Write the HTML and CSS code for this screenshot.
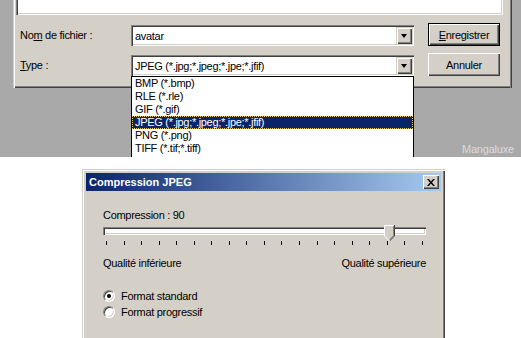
FILE: index.html
```html
<!DOCTYPE html>
<html lang="fr">
<head>
<meta charset="utf-8">
<title>Enregistrer - Compression JPEG</title>
<link rel="stylesheet" href="styles.css">
</head>
<body>
<div class="screen">
  <div class="shot-top">
    <div class="savedlg">
      <div class="filelist"></div>
      <div class="form">
        <div class="row">
          <span class="label">No<u>m</u> de fichier :</span>
          <div class="combo"><span class="combo-text">avatar</span><span class="drop-btn"><i class="tri"></i></span></div>
          <button class="btn default"><span><u>E</u>nregistrer</span></button>
        </div>
        <div class="row row2">
          <span class="label"><u>T</u>ype :</span>
          <div class="combo"><span class="combo-text">JPEG (*.jpg;*.jpeg;*.jpe;*.jfif)</span><span class="drop-btn"><i class="tri"></i></span></div>
          <button class="btn"><span>Annuler</span></button>
        </div>
      </div>
    </div>
    <ul class="droplist">
      <li>BMP (*.bmp)</li>
      <li>RLE (*.rle)</li>
      <li>GIF (*.gif)</li>
      <li class="sel">JPEG (*.jpg;*.jpeg;*.jpe;*.jfif)</li>
      <li>PNG (*.png)</li>
      <li>TIFF (*.tif;*.tiff)</li>
    </ul>
    <span class="watermark">Mangaluxe</span>
  </div>
  <div class="shot-bottom">
    <div class="jpegdlg">
      <div class="titlebar">
        <span class="title">Compression JPEG</span>
        <span class="close"><svg width="8" height="7" viewBox="0 0 8 7"><path d="M0 0h2l2 2.5L6 0h2L5 3.5 8 7H6L4 4.5 2 7H0l3-3.5z" fill="#000"/></svg></span>
      </div>
      <div class="content">
        <div class="caption">Compression : 90</div>
        <div class="slider">
          <div class="track"></div>
          <span class="thumb"><svg width="11" height="16" viewBox="0 0 11 16"><path d="M0.5 0.5h9.5v10l-5 5l-5-5z" fill="#d4d0c8"/><path d="M0.5 11V0.5H10" fill="none" stroke="#fff"/><path d="M10.5 0v11l-5 5" fill="none" stroke="#404040"/><path d="M9.5 1v9.6l-4 4" fill="none" stroke="#808080"/><path d="M0.5 11l5 5" fill="none" stroke="#fff"/></svg></span>
        </div>
        <div class="ticks">
          <i></i><i></i><i></i><i></i><i></i><i></i><i></i><i></i><i></i><i></i><i></i><i></i><i></i><i></i><i></i><i></i><i></i><i></i><i></i>
        </div>
        <div class="scale"><span>Qualité inférieure</span><span>Qualité supérieure</span></div>
        <div class="radios">
          <label class="radio"><span class="dot checked"></span>Format standard</label>
          <label class="radio"><span class="dot"></span>Format progressif</label>
        </div>
      </div>
    </div>
  </div>
</div>
</body>
</html>
```

FILE: styles.css
```css
* { box-sizing: border-box; }
html, body { margin: 0; padding: 0; }
body {
  width: 521px;
  height: 338px;
  overflow: hidden;
  background: #fff;
  font-family: "Liberation Sans", Arial, sans-serif;
  font-size: 11px;
  letter-spacing: -0.3px;
  color: #000;
}
.screen { width: 521px; height: 338px; display: flex; flex-direction: column; }

/* ---------- top screenshot ---------- */
.shot-top {
  position: relative;
  height: 157px;
  background: #a9a9a9;
  overflow: hidden;
  flex: none;
}
.savedlg {
  margin-left: 13px;
  width: 499px;
  height: 88px;
  background: #d4d0c8;
  box-shadow: inset 1px 0 #d4d0c8, inset 2px 0 #fff,
              inset -1px 0 #404040, inset -2px 0 #808080,
              inset 0 -1px #404040, inset 0 -2px #808080;
}
.filelist {
  margin-left: 3px;
  width: 487px;
  height: 15px;
  background: #fff;
  box-shadow: inset 1px 0 #808080, inset 2px 0 #404040,
              inset -1px 0 #fff, inset -2px 0 #d4d0c8,
              inset 0 -1px #fff, inset 0 -2px #d4d0c8;
}
.form { padding-left: 7px; padding-top: 8px; display: flex; flex-direction: column; gap: 7px; }
.row { display: flex; align-items: flex-end; height: 23px; }
.label { width: 111px; align-self: center; padding-top: 1px; }
.combo {
  width: 283px;
  height: 21px;
  background: #fff;
  display: flex;
  align-items: center;
  padding: 2px;
  box-shadow: inset 1px 1px #808080, inset 2px 2px #404040,
              inset -1px -1px #fff, inset -2px -2px #d4d0c8;
}
.combo-text { flex: 1; padding-left: 2px; white-space: nowrap; overflow: hidden; }
.drop-btn {
  width: 16px;
  height: 17px;
  background: #d4d0c8;
  display: flex;
  align-items: center;
  justify-content: center;
  box-shadow: inset 1px 1px #d4d0c8, inset 2px 2px #fff,
              inset -1px -1px #404040, inset -2px -2px #808080;
}
.tri {
  width: 0; height: 0;
  border-left: 3.5px solid transparent;
  border-right: 3.5px solid transparent;
  border-top: 4px solid #000;
  margin-top: 1px;
}
.btn {
  margin-left: 14px;
  width: 72px;
  height: 23px;
  padding: 0;
  border: 0;
  background: #d4d0c8;
  font: inherit;
  letter-spacing: inherit;
  color: #000;
  display: flex;
  align-items: center;
  justify-content: center;
  box-shadow: inset 1px 1px #fff, inset -1px -1px #404040, inset -2px -2px #808080;
}
.btn.default {
  box-shadow: inset 0 0 0 1px #000, inset 2px 2px #fff,
              inset -2px -2px #404040, inset -3px -3px #808080;
}
.btn span { padding-top: 1px; }

.droplist {
  position: absolute;
  left: 131px;
  top: 76px;
  width: 283px;
  height: 90px;
  margin: 0;
  padding: 0;
  list-style: none;
  background: #fff;
  border: 1px solid #000;
}
.droplist li {
  height: 13px;
  line-height: 13px;
  padding-left: 3px;
  white-space: nowrap;
}
.droplist li.sel {
  background: #0a246a;
  color: #fff;
  outline: 1px dotted #e8c870;
  outline-offset: -1px;
}
.watermark {
  position: absolute;
  right: 7px;
  bottom: 2px;
  color: #dcdcdc;
  font-size: 11px;
  letter-spacing: -0.2px;
}

/* ---------- bottom screenshot ---------- */
.shot-bottom {
  flex: 1;
  background: #fff;
  padding-left: 82px;
  padding-top: 12px;
  overflow: hidden;
}
.jpegdlg {
  width: 363px;
  height: 180px;
  background: #d4d0c8;
  padding: 4px;
  box-shadow: inset 1px 1px #d4d0c8, inset 2px 2px #fff,
              inset -1px -1px #404040, inset -2px -2px #808080;
}
.titlebar {
  height: 18px;
  background: linear-gradient(to right, #0a246a, #a6caf0);
  display: flex;
  align-items: center;
  justify-content: space-between;
  padding: 0 2px 0 3px;
}
.title { color: #fff; font-weight: bold; letter-spacing: 0; }
.close {
  width: 16px;
  height: 14px;
  background: #d4d0c8;
  display: flex;
  align-items: center;
  justify-content: center;
  box-shadow: inset 1px 1px #fff, inset -1px -1px #404040, inset -2px -2px #808080;
}
.content { padding-left: 17px; padding-top: 18px; }
.caption { height: 13px; line-height: 13px; }
.slider { position: relative; margin-top: 5px; width: 323px; height: 8px; }
.track {
  height: 8px;
  background: #fff;
  box-shadow: inset 1px 1px #808080, inset 2px 2px #404040,
              inset -1px -1px #fff, inset -2px -2px #d4d0c8;
}
.thumb { position: absolute; left: 281px; top: -2px; width: 11px; height: 16px; }
.thumb svg { display: block; }
.ticks {
  margin-top: 6px;
  margin-left: 3px;
  width: 317px;
  height: 4px;
  display: flex;
  justify-content: space-between;
}
.ticks i { width: 1px; height: 4px; background: #000; }
.scale {
  margin-top: 12px;
  width: 323px;
  display: flex;
  justify-content: space-between;
  height: 13px;
  line-height: 13px;
}
.radios { margin-top: 19px; display: flex; flex-direction: column; gap: 3px; }
.radio { display: flex; align-items: center; height: 13px; }
.dot {
  width: 12px;
  height: 12px;
  border-radius: 50%;
  margin-right: 6px;
  background: #fff;
  border: 1px solid;
  border-color: #808080 #fff #fff #808080;
  box-shadow: inset 1px 1px 0 #404040, inset -1px -1px 0 #d4d0c8;
  display: flex;
  align-items: center;
  justify-content: center;
}
.dot.checked::after {
  content: "";
  width: 4px;
  height: 4px;
  border-radius: 50%;
  background: #000;
}
```
